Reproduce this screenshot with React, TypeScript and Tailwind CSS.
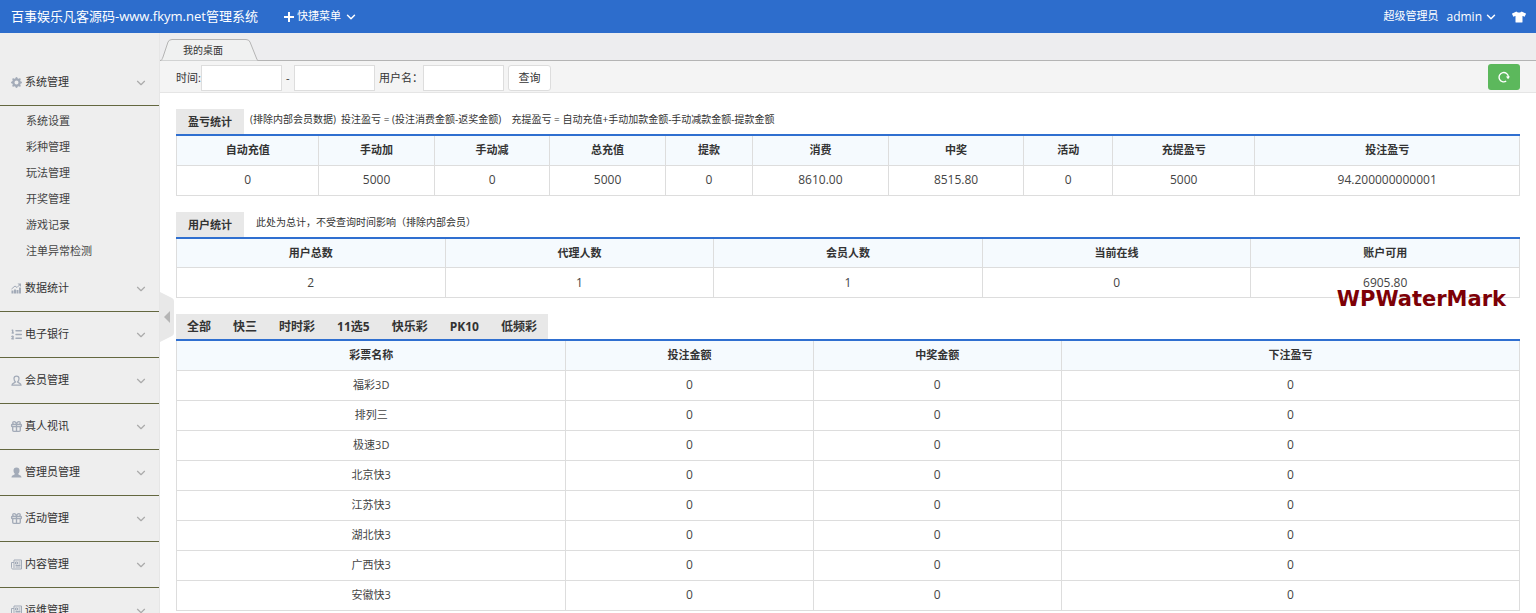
import { ChevronDown, Gift, ListOrdered } from "lucide-react";
import { FaTshirt } from "react-icons/fa";
import { BsGearFill } from "react-icons/bs";
import type { ReactNode } from "react";

const TrendIcon = () => (
  <svg viewBox="0 0 22 22" className="size-[11px]" fill="currentColor">
    <path d="M1 15h4v6H1zM6 13h4v8H6zM11 14h4v7h-4zM16 9h4v12h-4z" />
    <path d="M1 12L8 6l4 3 6-6" fill="none" stroke="currentColor" strokeWidth="2" />
    <path d="M13 1h7v7z" />
  </svg>
);

const MemberIcon = () => (
  <svg viewBox="0 0 22 22" className="size-[11px]" fill="none" stroke="currentColor" strokeWidth="2.5">
    <path d="M9 14c-2-2-3-4-3-7 0-4 2-5 5-5s5 1 5 5c0 3-1 5-3 7 1 2 7 2 7 6H2c0-4 6-4 7-6z" />
  </svg>
);

const AdminIcon = () => (
  <svg viewBox="0 0 22 22" className="size-[11px]" fill="currentColor">
    <path d="M8 14C6 12 5 10 5 7c0-4 2-6 6-6s6 2 6 6c0 3-1 5-3 7 1 2 7 2 7 7H1c0-5 6-5 7-7z" />
  </svg>
);

const NewsIcon = () => (
  <svg viewBox="0 0 22 22" className="size-[11px]" fill="none" stroke="currentColor" strokeWidth="2">
    <path d="M6 2h15v18H4c-2 0-3-1-3-3V7h5zM6 7v11M9 6h4v4H9zM15 6h4M15 10h4M9 13h10M9 16h10" />
  </svg>
);

const ReloadIcon = () => (
  <svg viewBox="0 0 22 22" className="size-3" fill="none" stroke="currentColor" strokeWidth="2.5">
    <path d="M15 18.5A8.5 8.5 0 1 1 19 11" />
    <path d="M14.5 10h7.5l-3.5 5z" fill="currentColor" stroke="none" />
  </svg>
);

type MenuItem = { label: string; icon: ReactNode; children?: string[] };

const menu: MenuItem[] = [
  {
    label: "系统管理",
    icon: <BsGearFill className="size-[11px]" />,
    children: ["系统设置", "彩种管理", "玩法管理", "开奖管理", "游戏记录", "注单异常检测"],
  },
  { label: "数据统计", icon: <TrendIcon /> },
  { label: "电子银行", icon: <ListOrdered className="-mx-px size-[13px]" strokeWidth={2.5} /> },
  { label: "会员管理", icon: <MemberIcon /> },
  { label: "真人视讯", icon: <Gift className="-mx-px size-[13px]" strokeWidth={2.5} /> },
  { label: "管理员管理", icon: <AdminIcon /> },
  { label: "活动管理", icon: <Gift className="-mx-px size-[13px]" strokeWidth={2.5} /> },
  { label: "内容管理", icon: <NewsIcon /> },
  { label: "运维管理", icon: <NewsIcon /> },
];

const profit = [
  { name: "自动充值", value: "0", width: "w-[10.6%]" },
  { name: "手动加", value: "5000", width: "w-[8.6%]" },
  { name: "手动减", value: "0", width: "w-[8.6%]" },
  { name: "总充值", value: "5000", width: "w-[8.6%]" },
  { name: "提款", value: "0", width: "w-[6.5%]" },
  { name: "消费", value: "8610.00", width: "w-[10.1%]" },
  { name: "中奖", value: "8515.80", width: "w-[10.1%]" },
  { name: "活动", value: "0", width: "w-[6.6%]" },
  { name: "充提盈亏", value: "5000", width: "w-[10.6%]" },
  { name: "投注盈亏", value: "94.200000000001", width: "w-[19.7%]" },
];

const users = [
  { name: "用户总数", value: "2", width: "w-1/5" },
  { name: "代理人数", value: "1", width: "w-1/5" },
  { name: "会员人数", value: "1", width: "w-1/5" },
  { name: "当前在线", value: "0", width: "w-1/5" },
  { name: "账户可用", value: "6905.80", width: "w-1/5" },
];

const lotteryColumns = [
  { name: "彩票名称", width: "w-[29%]" },
  { name: "投注金额", width: "w-[18.4%]" },
  { name: "中奖金额", width: "w-[18.5%]" },
  { name: "下注盈亏", width: "w-[34.1%]" },
];

const lotteries = ["福彩3D", "排列三", "极速3D", "北京快3", "江苏快3", "湖北快3", "广西快3", "安徽快3"];

const categories = ["全部", "快三", "时时彩", "11选5", "快乐彩", "PK10", "低频彩"];

const isNumber = (text: string) => /^[\d.]+$/.test(text);

function DataTable({ columns, rows }: { columns: { name: string; width: string }[]; rows: string[][] }) {
  return (
    <table className="w-full table-fixed border-collapse text-center">
      <thead>
        <tr className="h-[29px] bg-[#f5fafe]">
          {columns.map((col) => (
            <th key={col.name} className={`${col.width} border border-t-0 border-[#ddd] p-0 font-bold text-[#333]`}>
              {col.name}
            </th>
          ))}
        </tr>
      </thead>
      <tbody>
        {rows.map((row, i) => (
          <tr key={i} className="h-[30px]">
            {row.map((cell, j) => (
              <td key={j} className={`border border-[#ddd] p-0 text-[#444] ${isNumber(cell) ? "text-xs" : ""}`}>
                {cell}
              </td>
            ))}
          </tr>
        ))}
      </tbody>
    </table>
  );
}

function Section({ title, note, children }: { title: string; note: ReactNode; children: ReactNode }) {
  return (
    <section>
      <div className="flex h-[27px] border-b-2 border-[#2f6fd0]">
        <h2 className="bg-[#e8e8e8] px-3 font-bold leading-[25px] text-[#333]">{title}</h2>
        {note}
      </div>
      {children}
    </section>
  );
}

function Sidebar() {
  return (
    <aside className="w-40 shrink-0 overflow-hidden border-r border-[#e6e6e6] bg-[#eee] pt-[27px]">
      {menu.map((item) => (
        <div key={item.label}>
          <button className="flex h-[46px] w-full items-center border-b border-[#63673f] pl-[11px] pr-[11px] text-[#333]">
            <span className="text-[#a3abb8]">{item.icon}</span>
            <span className="ml-[3px]">{item.label}</span>
            <ChevronDown className="ml-auto size-[14px] text-[#aaa]" strokeWidth={2} />
          </button>
          {item.children && (
            <ul className="py-0.5">
              {item.children.map((child) => (
                <li key={child} className="h-[26px] pl-[26px] leading-[26px]">
                  <a href="#" className="text-[#444]">
                    {child}
                  </a>
                </li>
              ))}
            </ul>
          )}
        </div>
      ))}
    </aside>
  );
}

function Header() {
  return (
    <header className="flex h-[33px] shrink-0 items-center bg-[#2d6dcc] pl-[11px] pr-[10px] text-white">
      <a href="#" className="text-[13px]">
        百事娱乐凡客源码-www.fkym.net管理系统
      </a>
      <button className="ml-[26px] flex items-center">
        <svg viewBox="0 0 10 10" className="size-[10px]" stroke="currentColor" strokeWidth="2">
          <path d="M5 0v10M0 5h10" />
        </svg>
        <span className="ml-[3px]">快捷菜单</span>
        <ChevronDown className="ml-[3px] size-[14px]" strokeWidth={2.5} />
      </button>
      <span className="ml-auto">超级管理员</span>
      <button className="ml-2 flex items-center text-xs">
        admin
        <ChevronDown className="ml-0.5 size-[14px]" strokeWidth={2.5} />
      </button>
      <button aria-label="换肤" className="ml-[14px]">
        <FaTshirt className="size-[14px]" />
      </button>
    </header>
  );
}

export default function App() {
  return (
    <div className="relative flex h-screen flex-col overflow-hidden bg-white font-['Open_Sans','Noto_Sans_CJK_SC',sans-serif] text-[11px] text-[#333]">
      <Header />
      <div className="flex min-h-0 flex-1">
        <Sidebar />
        <main className="relative min-w-0 flex-1 overflow-hidden">
          <div className="flex h-7 items-end border-b border-[#b4b4b4] bg-[#ededef]">
            <button className="relative -mb-px h-[22px] w-[98px] text-[10px]">
              <svg viewBox="0 0 98 22" className="absolute inset-0 size-full" fill="#f0f1f1" stroke="#b4b4b4">
                <path d="M0 21.5C2 21.5 2 20 3 18L8 3Q9 .5 12 .5H86Q89 .5 90 3L96 18Q97 21.5 98 21.5" />
              </svg>
              <span className="relative -ml-3">我的桌面</span>
            </button>
          </div>
          <form className="flex h-8 items-center border-b border-[#e5e5e5] bg-[#f4f4f4] px-4">
            <div className="flex items-center pt-[3px]">
              <label htmlFor="from">时间:</label>
              <input id="from" className="h-[26px] w-[81px] border border-[#ddd] bg-white px-1" />
              <label htmlFor="to" className="w-3 text-center">
                -
              </label>
              <input id="to" className="h-[26px] w-[81px] border border-[#ddd] bg-white px-1" />
              <label htmlFor="username" className="ml-1">
                用户名：
              </label>
              <input id="username" className="h-[26px] w-[81px] border border-[#ddd] bg-white px-1" />
              <button type="button" className="ml-1 h-[26px] w-[43px] rounded-[3px] border border-[#ddd] bg-white">
                查询
              </button>
            </div>
            <button
              type="button"
              aria-label="刷新"
              className="ml-auto flex h-[26px] w-8 items-center justify-center rounded-[3px] bg-[#5cb85c] text-white"
            >
              <ReloadIcon />
            </button>
          </form>

          <div className="flex flex-col gap-4 px-4 pt-4">
            <Section
              title="盈亏统计"
              note={
                <p className="whitespace-pre pl-1.5 text-[10px] leading-5">
                  {"(排除内部会员数据)  投注盈亏 = (投注消费金额-返奖金额)    充提盈亏 = 自动充值+手动加款金额-手动减款金额-提款金额"}
                </p>
              }
            >
              <DataTable columns={profit} rows={[profit.map((p) => p.value)]} />
            </Section>

            <Section
              title="用户统计"
              note={<p className="pl-3 text-[10px] leading-5">此处为总计，不受查询时间影响（排除内部会员）</p>}
            >
              <DataTable columns={users} rows={[users.map((u) => u.value)]} />
            </Section>

            <section>
              <div className="flex h-[27px] border-b-2 border-[#2f6fd0]">
                {categories.map((name) => (
                  <button key={name} className="bg-[#e8e8e8] px-[11px] text-xs font-bold text-[#333]">
                    {name}
                  </button>
                ))}
              </div>
              <DataTable columns={lotteryColumns} rows={lotteries.map((name) => [name, "0", "0", "0"])} />
            </section>
          </div>

          <button aria-label="收起菜单" className="absolute left-0 top-[259px] h-[50px] w-[14px]">
            <svg viewBox="0 0 14 50" className="size-full">
              <path d="M0 0L12 6Q14 7 14 9V41Q14 43 12 44L0 50z" fill="#e8e8e8" />
              <path d="M10 19V31L4 25z" fill="#b5b5b5" />
            </svg>
          </button>
        </main>
      </div>
      <div className="pointer-events-none absolute right-[30px] top-[286px] font-['DejaVu_Sans',sans-serif] text-[21px] font-bold leading-[26px] text-[#7d0006]">
        WPWaterMark
      </div>
    </div>
  );
}
